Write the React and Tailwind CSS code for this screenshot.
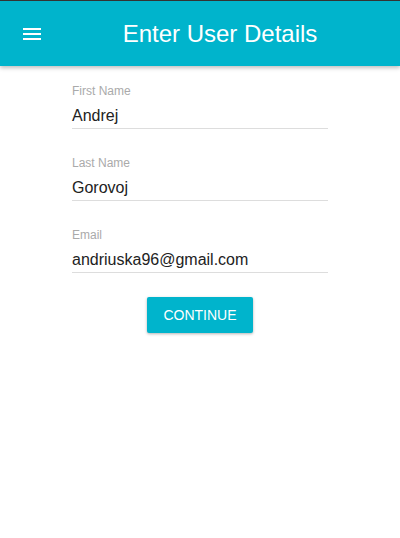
export default function App() {
    const fields = [
        { label: "First Name", value: "Andrej" },
        { label: "Last Name", value: "Gorovoj" },
        { label: "Email", value: "andriuska96@gmail.com" },
    ];

    return (
        <div className="w-[400px] h-[538px] bg-white font-['Liberation_Sans',Arial,sans-serif]">
            {/* Header */}
            <div className="border-t border-[#333] bg-[#00b4cc] h-[66px] flex items-center shadow-[0_2px_4px_rgba(0,0,0,0.25)] relative">
                <button className="w-[64px] h-full flex items-center justify-center">
                    <svg width="18" height="12" viewBox="0 0 18 12" fill="white">
                        <rect x="0" y="0" width="18" height="2" />
                        <rect x="0" y="5" width="18" height="2" />
                        <rect x="0" y="10" width="18" height="2" />
                    </svg>
                </button>
                <h1 className="flex-1 text-center text-white text-[24px] -ml-[24px]">
                    Enter User Details
                </h1>
            </div>

            {/* Form */}
            <div className="w-[256px] mx-auto pt-[18px]">
                <div className="flex flex-col gap-[27px]">
                    {fields.map((f) => (
                        <div key={f.label}>
                            <div className="text-[12px] text-[#aaaaaa] leading-[14px]">{f.label}</div>
                            <div className="text-[16px] text-[#222] leading-[20px] mt-[8px] pb-[2px] border-b border-[#dddddd]">
                                {f.value}
                            </div>
                        </div>
                    ))}
                </div>
                <div className="flex justify-center mt-[24px]">
                    <button className="w-[106px] h-[36px] bg-[#00b4cc] text-white text-[14px] rounded-[2px] shadow-[0_1px_3px_rgba(0,0,0,0.3)]">
                        CONTINUE
                    </button>
                </div>
            </div>
        </div>
    );
}
